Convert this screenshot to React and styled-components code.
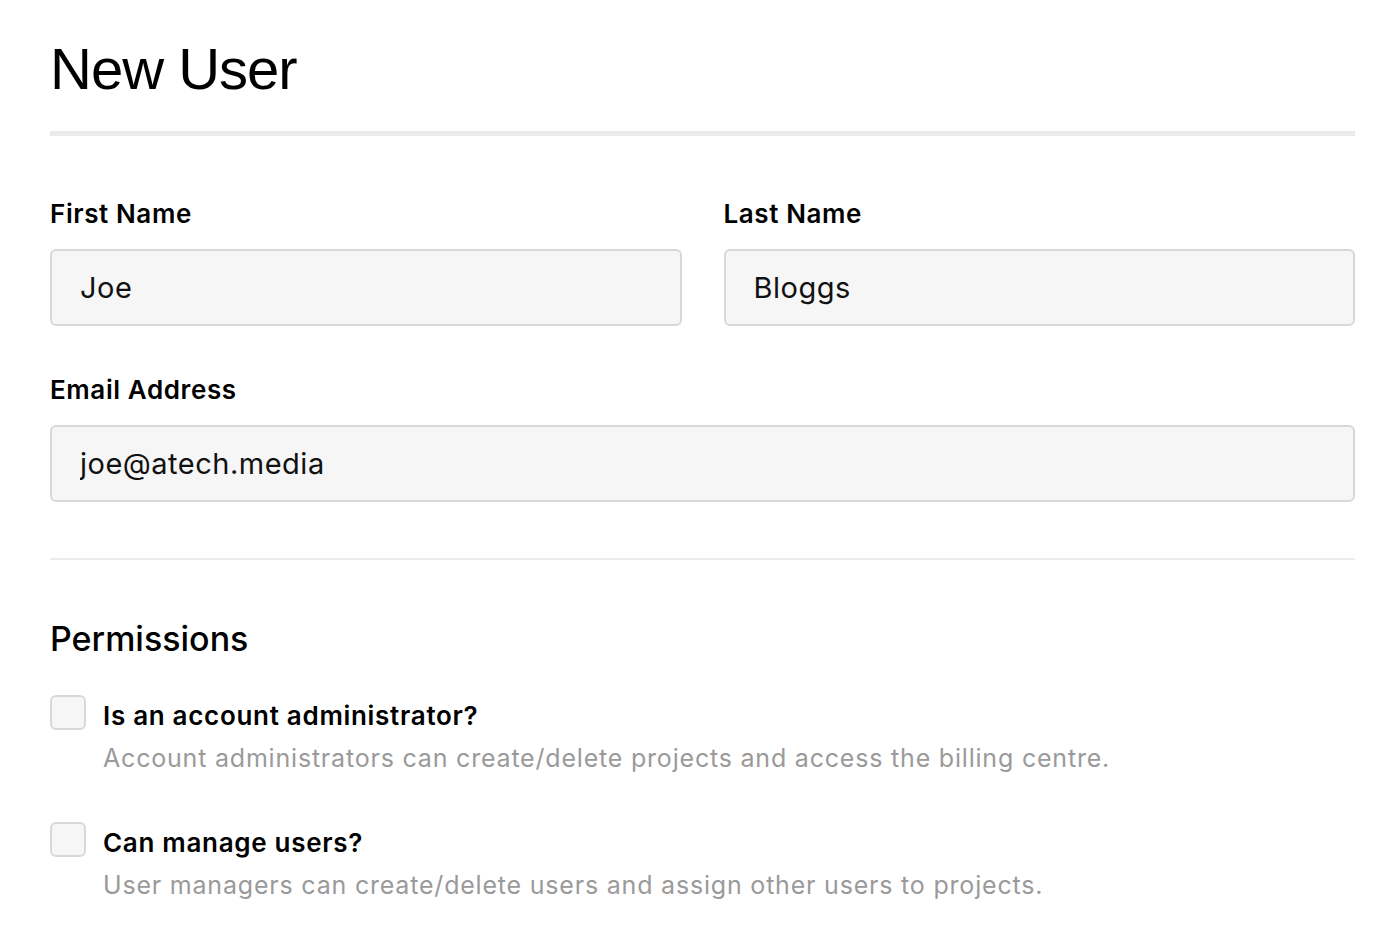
import React from "react";
import styled, { createGlobalStyle } from "styled-components";

const Global = createGlobalStyle`
  html, body { margin: 0; padding: 0; background: #fff; }
  body { font-family: Inter, "Noto Sans", sans-serif; color: #000; }
  * { box-sizing: border-box; }
`;

const Page = styled.div`
  width: 1400px;
  padding: 36px 45px 40px 50px;
`;

const Title = styled.h1`
  margin: 0;
  font-family: "Liberation Sans", Arial, sans-serif;
  font-weight: 400;
  font-size: 58px;
  line-height: 66px;
  letter-spacing: -1px;
`;

const ThickRule = styled.hr`
  margin: 29px 0 0;
  border: 0;
  height: 5px;
  background: #ebebeb;
`;

const ThinRule = styled.hr`
  margin: 56px 0 0;
  border: 0;
  height: 2px;
  background: #ececec;
`;

const Row = styled.div`
  display: grid;
  grid-template-columns: 1fr 1fr;
  column-gap: 42px;
  margin-top: ${(p) => p.$top}px;
`;

const Field = styled.div`
  display: flex;
  flex-direction: column;
  margin-top: ${(p) => p.$top || 0}px;
`;

const Label = styled.label`
  font-weight: 600;
  font-size: 26px;
  line-height: 32px;
  letter-spacing: 0.6px;
  margin-bottom: 19px;
`;

const Input = styled.input`
  width: 100%;
  height: 77px;
  border: 2px solid #d8d8d8;
  border-radius: 6px;
  background: #f6f6f6;
  padding: 0 28px;
  font-family: Inter, sans-serif;
  font-size: 29px;
  letter-spacing: 0.5px;
  color: #111;
  outline: none;
`;

const Heading = styled.h2`
  margin: 58px 0 0;
  font-weight: 500;
  font-size: 34px;
  line-height: 42px;
`;

const Option = styled.div`
  display: grid;
  grid-template-columns: 36px 1fr;
  column-gap: 17px;
  align-items: start;
  margin-top: ${(p) => p.$top}px;
`;

const Box = styled.span`
  width: 36px;
  height: 35px;
  border: 2px solid #d8d8d8;
  border-radius: 6px;
  background: #f6f6f6;
  margin-top: -3px;
`;

const OptionText = styled.div`
  display: flex;
  flex-direction: column;
`;

const OptionTitle = styled.div`
  font-weight: 600;
  font-size: 26px;
  line-height: 36px;
  letter-spacing: 0.7px;
`;

const OptionDesc = styled.div`
  font-size: 25px;
  line-height: 32px;
  letter-spacing: 0.8px;
  color: #9a9a9a;
  margin-top: 8px;
`;

export default function App() {
  return (
    <Page>
      <Global />
      <Title>New User</Title>
      <ThickRule />
      <Row $top={62}>
        <Field>
          <Label>First Name</Label>
          <Input defaultValue="Joe" />
        </Field>
        <Field>
          <Label>Last Name</Label>
          <Input defaultValue="Bloggs" />
        </Field>
      </Row>
      <Field $top={48}>
        <Label>Email Address</Label>
        <Input defaultValue="joe@atech.media" />
      </Field>
      <ThinRule />
      <Heading>Permissions</Heading>
      <Option $top={38}>
        <Box />
        <OptionText>
          <OptionTitle>Is an account administrator?</OptionTitle>
          <OptionDesc>Account administrators can create/delete projects and access the billing centre.</OptionDesc>
        </OptionText>
      </Option>
      <Option $top={51}>
        <Box />
        <OptionText>
          <OptionTitle>Can manage users?</OptionTitle>
          <OptionDesc>User managers can create/delete users and assign other users to projects.</OptionDesc>
        </OptionText>
      </Option>
    </Page>
  );
}
